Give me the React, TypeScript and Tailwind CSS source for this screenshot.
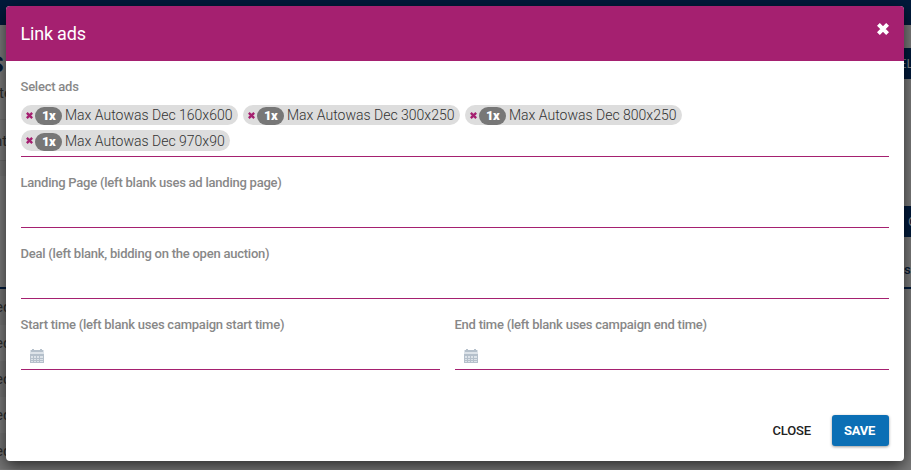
import type { ReactNode } from "react";

const ads = [
  "Max Autowas Dec 160x600",
  "Max Autowas Dec 300x250",
  "Max Autowas Dec 800x250",
  "Max Autowas Dec 970x90",
];

function Cross({ className }: { className: string }) {
  return (
    <svg viewBox="0 0 12 12" className={className} fill="none" stroke="currentColor" strokeWidth="4">
      <path d="M1.4 1.4 10.6 10.6M10.6 1.4 1.4 10.6" />
    </svg>
  );
}

function CalendarIcon() {
  return (
    <svg viewBox="0 0 14 14" className="h-3.5 w-3.5" shapeRendering="crispEdges">
      <path fill="#dde3e9" d="M0 1h14v13H0z" />
      <path fill="#b5c0cb" d="M2 0h2v1h6V0h2v1h1v2H1V1h1z" />
      <path fill="#b5c0cb" d="M0 5h14v1H0z" />
      <path stroke="#b5c0cb" fill="none" d="M.5 5v9M13.5 5v9M0 6.5h14M0 9.5h14M0 13.5h14M0 11.5h14M3.5 6v8M6.5 6v8M9.5 6v8" />
    </svg>
  );
}

function Field({ label, children, className = "" }: { label: string; children?: ReactNode; className?: string }) {
  return (
    <div className={`flex flex-col border-b border-[#a52070] ${className}`}>
      <label className="-ml-[0.5px] h-5 text-[13px] leading-5 font-medium tracking-[-0.235px] whitespace-nowrap text-[#888888]">
        {label}
      </label>
      {children}
    </div>
  );
}

function Chip({ name }: { name: string }) {
  return (
    <li className="flex h-5 items-center rounded-full bg-[#dddddd] pr-[5px] pl-[5px] last:h-[21px]">
      <Cross className="h-[7px] w-[7px] text-[#a52070]" />
      <span className="mt-[2px] ml-[2px] flex h-[18px] w-[27px] items-center justify-center rounded-full bg-[#777777] pb-px text-[13px] leading-none font-black tracking-[-0.5px] text-white">
        1x
      </span>
      <span className="ml-[3px] w-[168px] text-[14px] leading-5 font-light whitespace-nowrap text-[#333333] in-[li:last-child]:w-[160px]">
        {name}
      </span>
    </li>
  );
}

function Backdrop() {
  return (
    <div className="flex h-full flex-col bg-[#7b7b7b] text-[#2d2d2d]">
      <div className="h-[25px] shrink-0 bg-[#001a3b]" />
      <div className="flex flex-1 justify-between">
        <div className="w-5 overflow-hidden text-[15px]">
          <div className="-ml-[10px] h-[52px] pt-[28px] text-[22px] leading-6 font-bold text-[#071a34]">S</div>
          <div className="-ml-px h-[43px] border-b border-[#707070] pt-[6px] leading-5">te</div>
          <div className="-ml-[6px] h-[40px] pt-[11px] leading-5">nt</div>
          <div className="h-[16px] border-t border-[#6a6a6a] bg-[#757575]" />
          <div className="h-[111px]" />
          <div className="h-[2px] bg-[#001a3b]" />
          {[0, 1, 2, 3, 4].map((row) => (
            <div key={row} className="h-9 leading-9 odd:bg-[#757575]">
              <span className="-ml-[5px]">ed</span>
            </div>
          ))}
        </div>
        <div className="w-[11px] overflow-hidden">
          <div className="mt-[23px] h-[31px] bg-[#001a3b] text-[13px] leading-[31px] text-[#85878a]">
            <span className="-ml-px">EL</span>
          </div>
          <div className="mt-[127px] h-[31px] bg-[#001a3b] pl-2 text-[13px] leading-[31px] text-[#85878a]">C</div>
          <div className="mt-[21px] h-[31px] border-b-2 border-[#001a3b] pl-[4px] text-[13px] leading-6 font-medium text-[#071a34]">s</div>
        </div>
      </div>
    </div>
  );
}

export default function App() {
  return (
    <div className="relative h-[470px] w-[911px] overflow-hidden font-['Roboto',sans-serif]">
      <Backdrop />
      <div className="absolute inset-0 flex pt-[6px] pr-[7px] pb-[9px] pl-[6px]">
        <section className="flex flex-1 flex-col overflow-hidden rounded-[4px] bg-white shadow-[0_5px_15px_rgba(0,0,0,0.65)]">
          <header className="flex h-[55px] shrink-0 items-center justify-between bg-[#a52070] px-[15px] text-white">
            <h1 className="-ml-[0.5px] text-[18px] leading-6 tracking-[-0.2px]">Link ads</h1>
            <Cross className="mb-[9px] h-[12px] w-[12px]" />
          </header>
          <div className="flex flex-col px-[15px]">
            <Field label="Select ads" className="h-[96px] pt-4">
              <ul className="mt-2 flex flex-wrap gap-[5px]">
                {ads.map((name) => (
                  <Chip key={name} name={name} />
                ))}
              </ul>
            </Field>
            <Field label="Landing Page (left blank uses ad landing page)" className="h-[71px] pt-4" />
            <Field label="Deal (left blank, bidding on the open auction)" className="h-[71px] pt-4" />
            <div className="flex gap-[15px]">
              <Field label="Start time (left blank uses campaign start time)" className="h-[71px] w-[419px] pt-4">
                <div className="mt-[14px] ml-[9px]">
                  <CalendarIcon />
                </div>
              </Field>
              <Field label="End time (left blank uses campaign end time)" className="h-[71px] flex-1 pt-4">
                <div className="mt-[14px] ml-[9px]">
                  <CalendarIcon />
                </div>
              </Field>
            </div>
          </div>
          <footer className="mt-[45px] flex items-center justify-end gap-[21px] pr-[15px] text-[13px] font-medium">
            <button className="tracking-[-0.15px] text-[#222222]">CLOSE</button>
            <button className="h-[31px] w-[57px] rounded-[3px] bg-[#0b6fb5] pr-[2px] font-bold tracking-[-0.3px] text-white shadow-[0_1px_3px_rgba(0,0,0,0.4)]">
              SAVE
            </button>
          </footer>
        </section>
      </div>
    </div>
  );
}
